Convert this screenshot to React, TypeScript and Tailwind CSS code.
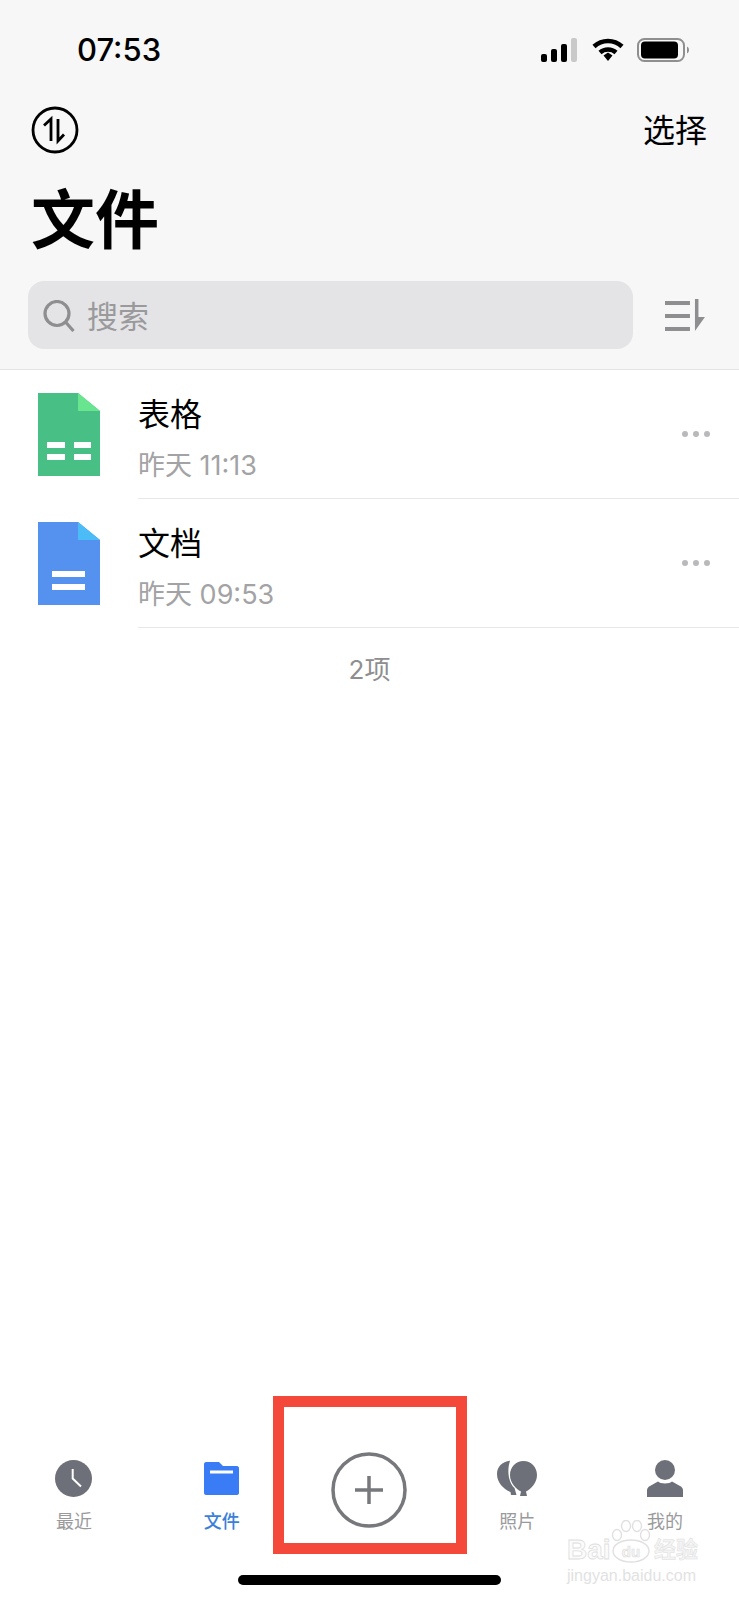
const sans = 'font-["Inter","Noto_Sans_CJK_SC",sans-serif]';

function StatusIcons() {
  return (
    <div className="flex items-center">
      <svg width="36" height="24" viewBox="0 0 36 24" className="mr-[15px]">
        <rect x="0" y="16" width="6" height="8" rx="2" fill="#000" />
        <rect x="10" y="11" width="6" height="13" rx="2" fill="#000" />
        <rect x="20" y="6" width="6" height="18" rx="2" fill="#000" />
        <rect x="30" y="0" width="6" height="24" rx="2" fill="#c9c9c9" />
      </svg>
      <svg width="32" height="24" viewBox="0 0 32 24" fill="none" stroke="#000" strokeWidth="4.5" className="mr-[13px]">
        <path d="M2 8.5C10 1 22 1 30 8.5" />
        <path d="M8 14.5C12.500 10.500 19.500 10.500 24 14.500" />
        <path d="M11.500 17.500L16 14.500L20.500 17.500L16 23Z" fill="#000" stroke="none" />
      </svg>
      <svg width="52" height="24" viewBox="0 0 52 24" fill="none">
        <rect x="1" y="1" width="46" height="22" rx="6.500" stroke="#8f8f8f" strokeWidth="2" />
        <rect x="4" y="3.500" width="37" height="17" rx="4" fill="#000" />
        <path d="M50 8.500C51.500 9.500 52 10.500 52 12C52 13.500 51.500 14.500 50 15.500Z" fill="#8f8f8f" />
      </svg>
    </div>
  );
}

function FileIcon({ kind }: { kind: 'sheet' | 'doc' }) {
  const sheet = kind === 'sheet';
  return (
    <svg width="62" height="83" viewBox="0 0 62 83" className="shrink-0">
      <path d="M0 0H40L62 18V83H0Z" fill={sheet ? '#48bf85' : '#5591ee'} />
      <path d="M40 0L62 18H40Z" fill={sheet ? '#69e48f' : '#4cbcf6'} />
      {sheet ? (
        <g fill="#fff">
          <rect x="9" y="49" width="18" height="6" />
          <rect x="36" y="49" width="17" height="6" />
          <rect x="9" y="61" width="18" height="6" />
          <rect x="36" y="61" width="17" height="6" />
        </g>
      ) : (
        <g fill="#fff">
          <rect x="14" y="49" width="33" height="6" />
          <rect x="14" y="62" width="33" height="6" />
        </g>
      )}
    </svg>
  );
}

function FileRow({ kind, name, time }: { kind: 'sheet' | 'doc'; name: string; time: string }) {
  return (
    <div className="flex h-[129px] items-center pl-[38px]">
      <FileIcon kind={kind} />
      <div className="ml-[38px] flex h-full flex-1 items-center justify-between border-b border-[#e8e8e8] pr-[29px]">
        <div className="flex flex-col pt-[10px]">
          <span className="text-[32px] leading-[40px] text-black">{name}</span>
          <span className="mt-[13px] text-[27px] leading-[36px] text-[#a3a3a5]">{time}</span>
        </div>
        <div className="flex gap-[5px]">
          <span className="size-[6px] rounded-full bg-[#b9b9bb]" />
          <span className="size-[6px] rounded-full bg-[#b9b9bb]" />
          <span className="size-[6px] rounded-full bg-[#b9b9bb]" />
        </div>
      </div>
    </div>
  );
}

function TabItem({ label, active, children }: { label: string; active?: boolean; children: React.ReactNode }) {
  return (
    <div className="flex flex-col items-center pt-[8px]">
      <div className="flex h-[37px] items-center justify-center">{children}</div>
      <span className={`mt-[13px] text-[18px] leading-[24px] ${active ? 'font-medium text-[#3b7fd9]' : 'text-[#9a9a9c]'}`}>
        {label}
      </span>
    </div>
  );
}

function Watermark() {
  return (
    <div className='pointer-events-none absolute left-[567px] top-[1520px] flex w-[134px] flex-col font-["Liberation_Sans","Noto_Sans_CJK_SC",sans-serif]'>
      <div className="flex items-end">
        <span className="w-[44px] text-[28px] font-bold leading-[26px] text-[#fbfbfb] [-webkit-text-stroke:0.8px_#dedede]">Bai</span>
        <svg width="40" height="43" viewBox="0 0 40 43" fill="#fff" stroke="#e0e0e0" strokeWidth="1.4">
          <ellipse cx="6" cy="15" rx="4.500" ry="5.500" />
          <ellipse cx="15" cy="6" rx="4.500" ry="5.500" />
          <ellipse cx="26" cy="6" rx="4.500" ry="5.500" />
          <ellipse cx="34" cy="15" rx="4.500" ry="5.500" />
          <ellipse cx="20" cy="31" rx="18" ry="11" />
          <text x="20" y="37" textAnchor="middle" fontSize="15" fontWeight="700" fill="#f6f6f6" stroke="#dcdcdc" strokeWidth="0.6">du</text>
        </svg>
        <span className="ml-[3px] text-[22px] font-bold leading-[26px] text-[#f4f4f4] [-webkit-text-stroke:0.5px_#dedede]">经验</span>
      </div>
      <span className="mt-[4px] text-[16px] leading-[18px] text-[#e2e2e2]">jingyan.baidu.com</span>
    </div>
  );
}

export default function App() {
  return (
    <div className={`relative flex h-[1600px] w-[739px] flex-col overflow-hidden bg-white ${sans}`}>
      <header className="border-b border-[#e4e4e4] bg-[#f7f7f7] pb-[20px]">
        <div className="flex h-[98px] items-center justify-between pl-[77px] pr-[50px] pt-[0px]">
          <span className="text-[31px] font-medium leading-none text-black">07:53</span>
          <div className="pt-[2px]">
            <StatusIcons />
          </div>
        </div>
        <div className="flex h-[62px] items-center justify-between pl-[31px] pr-[32px] pt-[2px]">
          <svg width="48" height="48" viewBox="0 0 48 48" fill="none" stroke="#000" strokeWidth="2.800">
            <circle cx="24" cy="24" r="22" />
            <path d="M20 35V13L13 19.500" />
            <path d="M27 13V35L33 28.500" />
          </svg>
          <span className="pt-[2px] text-[32px] leading-[40px] text-black">选择</span>
        </div>
        <h1 className="flex h-[114px] items-center pl-[31px] pt-[5px] text-[64px] font-bold leading-none text-black">文件</h1>
        <div className="flex items-center pl-[28px] pr-[33px] pt-[7px]">
          <div className="flex h-[68px] w-[606px] items-center rounded-[16px] bg-[#e4e4e6] pl-[15px]">
            <svg width="32" height="32" viewBox="0 0 32 32" fill="none" stroke="#8e8e90" strokeWidth="3.200" className="mt-[2px]">
              <circle cx="14" cy="13.500" r="12" />
              <path d="M22.500 22L30.500 31" />
            </svg>
            <span className="ml-[12px] pt-[4px] text-[31px] leading-[40px] text-[#9a9a9c]">搜索</span>
          </div>
          <svg width="41" height="32" viewBox="0 0 41 32" className="ml-[32px]" fill="#8e8e90">
            <rect x="0" y="2" width="25" height="4" />
            <rect x="0" y="15" width="25" height="4" />
            <rect x="0" y="28" width="25" height="4" />
            <path d="M30 0H33.500V18H40L30 32Z" />
          </svg>
        </div>
      </header>

      <main className="flex-1">
        <FileRow kind="sheet" name="表格" time="昨天 11:13" />
        <FileRow kind="doc" name="文档" time="昨天 09:53" />
        <p className="mt-[25px] text-center text-[26px] leading-[34px] text-[#8e8e90]">2项</p>
      </main>

      <footer>
        <div className="grid h-[123px] grid-cols-5">
          <TabItem label="最近">
            <svg width="37" height="37" viewBox="0 0 37 37">
              <circle cx="18.500" cy="18.500" r="18.500" fill="#6d7079" />
              <path d="M17.700 9V18.500L26 26.500" fill="none" stroke="#fff" strokeWidth="2" />
            </svg>
          </TabItem>
          <TabItem label="文件" active>
            <svg width="35" height="33" viewBox="0 0 35 33">
              <path d="M0 2C0 1 1 0 2 0H15L19 4H33C34 4 35 5 35 6V31C35 32 34 33 33 33H2C1 33 0 32 0 31Z" fill="#3a7cf6" />
              <rect x="6" y="8.500" width="23" height="3" fill="#fff" />
            </svg>
          </TabItem>
          <div className="flex justify-center">
            <svg width="76" height="76" viewBox="0 0 76 76" fill="none" stroke="#77787c" strokeWidth="3.500">
              <circle cx="38" cy="38" r="36" />
              <path d="M38 24V52M24 38H52" />
            </svg>
          </div>
          <TabItem label="照片">
            <svg width="40" height="37" viewBox="0 0 40 37" fill="#6d7079">
              <path d="M13 .8C5 1.500 0 7 0 14C0 22 6 29 13.500 32L14 35H19.500L17.500 28C12 23 9.500 12 13 .8Z" />
              <path d="M26.500 1C19 1 13 7 13 15C13 23 19 29 24 31.500L23 36H30L29 31.500C34 29 40 23 40 15C40 7 34 1 26.500 1Z" />
            </svg>
          </TabItem>
          <TabItem label="我的">
            <svg width="36" height="37" viewBox="0 0 36 37" fill="#6d7079">
              <circle cx="18" cy="10" r="10" />
              <path d="M11 21.500C13 24 23 24 25 21.500L33 26C35 27 36 28.500 36 30.500V37H0V30.500C0 28.500 1 27 3 26Z" />
            </svg>
          </TabItem>
        </div>
        <div className="mx-auto h-[10px] w-[263px] rounded-full bg-black" />
        <div className="h-[15px]" />
      </footer>

      {/* annotation box drawn over the add button */}
      <div className="pointer-events-none absolute left-[273px] top-[1396px] h-[158px] w-[194px] border-[11px] border-[#f4493a]" />

      <Watermark />
    </div>
  );
}
